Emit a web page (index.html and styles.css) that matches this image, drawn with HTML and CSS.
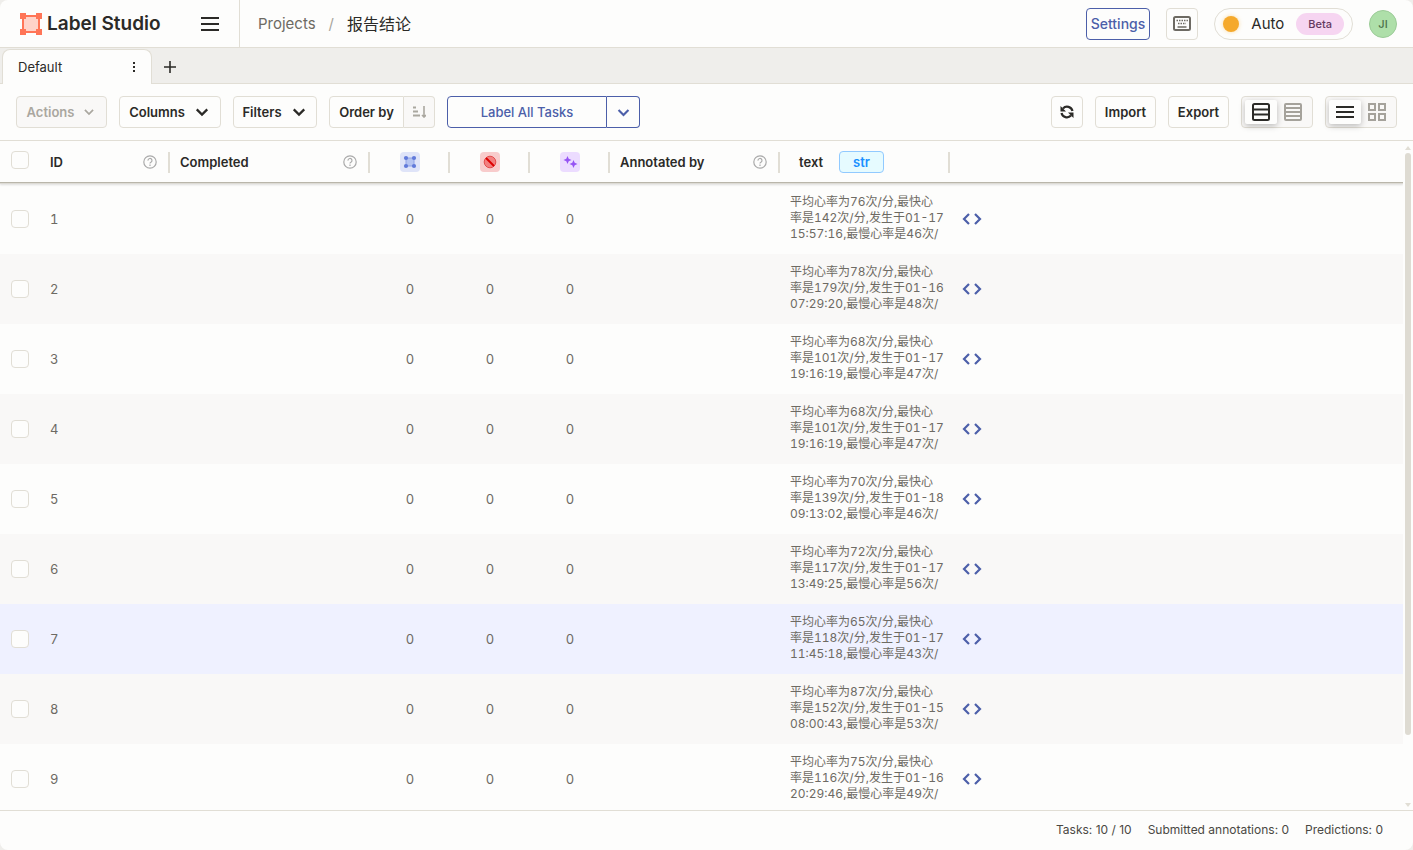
FILE: index.html
```
<!DOCTYPE html>
<html lang="zh">
<head>
    <meta charset="UTF-8">
    <meta name="viewport" content="width=device-width, initial-scale=1.0">
    <title>Label Studio</title>
    <link rel="stylesheet" href="styles.css">
</head>
<body>
    <svg class="sprite" aria-hidden="true">
        <symbol id="icon-chevron" viewBox="0 0 24 24"><path d="M5 8.500l7 7 7-7" fill="none" stroke="currentColor" stroke-width="3"/></symbol>
        <symbol id="icon-help" viewBox="0 0 14 14"><circle cx="7" cy="7" r="6.200" fill="none" stroke="currentColor" stroke-width="1.200"/><path d="M5 5.600a2 2 0 1 1 3 1.600c-.7.400-1 .6-1 1.200M7 9.600v1.300" fill="none" stroke="currentColor" stroke-width="1.200"/></symbol>
        <symbol id="icon-code" viewBox="0 0 20 12"><path d="M7 1L2 6l5 5M13 1l5 5-5 5" fill="none" stroke="currentColor" stroke-width="2.200"/></symbol>
    </svg>

    <header class="header">
        <a class="logo" href="#">
            <svg width="22" height="22" viewBox="0 0 22 22"><path d="M3 3h16v16H3z" fill="#ffd3c9" stroke="#ff7557" stroke-width="2"/><path d="M0 0h6v6H0zM16 0h6v6h-6zM0 16h6v6H0zM16 16h6v6h-6z" fill="#ff7557"/></svg>
            <span>Label Studio</span>
        </a>
        <button class="menu-button" aria-label="Menu"><svg width="18" height="14" viewBox="0 0 18 14"><path d="M0 1h18M0 7h18M0 13h18" stroke="currentColor" stroke-width="2"/></svg></button>
        <nav class="breadcrumbs">
            <a href="#">Projects</a>
            <span class="slash">/</span>
            <span class="current">报告结论</span>
        </nav>
        <div class="header-actions">
            <a class="settings" href="#">Settings</a>
            <button class="button keyboard" aria-label="Keyboard shortcuts"><svg width="18" height="15" viewBox="0 0 18 15"><rect x="1" y="1" width="16" height="13" rx="1.500" fill="none" stroke="currentColor" stroke-width="2"/><path d="M3.500 4.500h11.400M5 7.500h8" stroke="currentColor" stroke-width="1.500" stroke-dasharray="1.500 1"/><path d="M4.500 11h9" stroke="currentColor" stroke-width="1.500"/></svg></button>
            <button class="theme"><i class="sun"></i>Auto<span class="beta">Beta</span></button>
            <button class="avatar">JI</button>
        </div>
    </header>

    <div class="tabs">
        <div class="tab">
            <a href="#">Default</a>
            <button class="tab-menu" aria-label="Tab menu"><svg width="4" height="12" viewBox="0 0 4 12"><path d="M1 1h2v2H1zM1 5h2v2H1zM1 9h2v2H1z" fill="currentColor"/></svg></button>
        </div>
        <button class="tab-add" aria-label="Add tab"><svg width="12" height="12" viewBox="0 0 12 12"><path d="M6 0v12M0 6h12" stroke="currentColor" stroke-width="1.600"/></svg></button>
    </div>

    <div class="toolbar">
        <button class="button actions" disabled>Actions<svg width="14" height="14"><use href="#icon-chevron"/></svg></button>
        <button class="button columns">Columns<svg width="18" height="18"><use href="#icon-chevron"/></svg></button>
        <button class="button filters">Filters<svg width="18" height="18"><use href="#icon-chevron"/></svg></button>
        <div class="group">
            <button class="button order-by">Order by</button>
            <button class="button sort" disabled aria-label="Sort direction"><svg width="14" height="12" viewBox="0 0 14 12"><path d="M1 1.500h3M1 5.500h5M1 9.500h7" stroke="currentColor" stroke-width="2"/><path d="M12 0v11M10 9l2 2 2-2" fill="none" stroke="currentColor" stroke-width="1.600"/></svg></button>
        </div>
        <div class="group primary">
            <button class="button label-all">Label All Tasks</button>
            <button class="button label-menu" aria-label="Label options"><svg width="17" height="17"><use href="#icon-chevron"/></svg></button>
        </div>
        <div class="toolbar-right">
            <button class="button refresh" aria-label="Refresh"><svg width="14" height="14" viewBox="0 0 14 14"><path d="M12.500 6A5.600 5.600 0 0 0 3 3.400M1.500 8A5.600 5.600 0 0 0 11 10.600" fill="none" stroke="currentColor" stroke-width="2.200"/><path d="M.5 1v5.500H6zM13.500 13V7.500H8z" fill="currentColor"/></svg></button>
            <button class="button wide">Import</button>
            <button class="button wide">Export</button>
            <div class="toggle">
                <button class="selected" aria-label="Normal rows"><svg width="18" height="18" viewBox="0 0 18 18"><rect x="1" y="1" width="16" height="16" rx="1.500" fill="none" stroke="currentColor" stroke-width="2"/><path d="M1 6.500h16M1 11.500h16" stroke="currentColor" stroke-width="2"/></svg></button>
                <button aria-label="Compact rows"><svg width="18" height="18" viewBox="0 0 18 18"><rect x="1" y="1" width="16" height="16" rx="1" fill="none" stroke="currentColor" stroke-width="2"/><path d="M1 5h16M1 9h16M1 13h16" stroke="currentColor" stroke-width="1.800"/></svg></button>
            </div>
            <div class="toggle">
                <button class="selected" aria-label="List view"><svg width="18" height="12" viewBox="0 0 18 12"><path d="M0 1h18M0 6h18M0 11h18" stroke="currentColor" stroke-width="2"/></svg></button>
                <button aria-label="Grid view"><svg width="18" height="18" viewBox="0 0 18 18"><path d="M1 1h6v6H1zM11 1h6v6h-6zM1 11h6v6H1zM11 11h6v6h-6z" fill="none" stroke="currentColor" stroke-width="2"/></svg></button>
            </div>
        </div>
    </div>

    <main class="table-area">
        <div class="table-scroll">
            <table>
                <colgroup>
                    <col class="col-check"><col class="col-id"><col class="col-completed"><col class="col-count"><col class="col-count"><col class="col-count"><col class="col-annotated"><col class="col-text"><col>
                </colgroup>
                <thead>
                    <tr>
                        <th><input type="checkbox" aria-label="Select all"></th>
                        <th><div class="head">ID<svg width="14" height="14"><use href="#icon-help"/></svg></div></th>
                        <th><div class="head">Completed<svg width="14" height="14"><use href="#icon-help"/></svg></div></th>
                        <th><div class="head count"><span class="badge blue"><svg width="14" height="14" viewBox="0 0 14 14"><path d="M3 3h8v8H3z" fill="#b5c4f1" stroke="#8fa2e6"/><circle cx="3" cy="3" r="2.100"/><circle cx="11" cy="3" r="2.100"/><circle cx="3" cy="11" r="2.100"/><circle cx="11" cy="11" r="2.100"/></svg></span></div></th>
                        <th><div class="head count"><span class="badge red"><svg width="14" height="14" viewBox="0 0 14 14"><circle cx="7" cy="7" r="5.800" fill="#f28080" stroke="#e34d4d"/><path d="M3 3l8 8" stroke="#d00" stroke-width="2"/></svg></span></div></th>
                        <th><div class="head count"><span class="badge purple"><svg width="16" height="16" viewBox="0 0 16 16"><path d="M5.500 2l1.200 2.800L9.500 6 6.700 7.200 5.500 10 4.300 7.200 1.500 6l2.800-1.200zM11.500 6l1.200 2.800L15.500 10l-2.800 1.200L11.500 14l-1.200-2.800L7.500 10l2.800-1.200z"/></svg></span></div></th>
                        <th><div class="head">Annotated by<svg width="14" height="14"><use href="#icon-help"/></svg></div></th>
                        <th><div class="head text-head">text<span class="type">str</span></div></th>
                        <th></th>
                    </tr>
                </thead>
                <tbody id="tasks"></tbody>
            </table>
        </div>
        <div class="scrollbar" aria-hidden="true"><i class="arrow up"></i><i class="thumb"></i><i class="arrow down"></i></div>
    </main>

    <footer class="footer">
        <span>Tasks: 10 / 10</span>
        <span>Submitted annotations: 0</span>
        <span>Predictions: 0</span>
    </footer>
    <script src="tasks.js"></script>
</body>
</html>
```
FILE: styles.css
```
* {
    box-sizing: border-box;
}

:root {
    --surface: #fdfdfc;
    --surface-alt: #f9f8f7;
    --border: #e1ded5;
    --text: #2b2a27;
    --muted: #6d6a63;
    --blue: #4c5fa9;
}

html {
    background: #efeeeb;
}

body {
    margin: 0;
    height: 100vh;
    display: flex;
    flex-direction: column;
    overflow: hidden;
    border-radius: 8px;
    background: var(--surface);
    color: var(--text);
    font: 13px/20px Inter, "Noto Sans CJK SC", sans-serif;
}

button {
    font: inherit;
    color: inherit;
    margin: 0;
    padding: 0;
    border: 0;
    background: none;
    display: flex;
    align-items: center;
    justify-content: center;
}

a {
    color: inherit;
    text-decoration: none;
}

svg {
    display: block;
    flex: none;
}

.sprite {
    position: absolute;
    width: 0;
    height: 0;
}

.header {
    display: flex;
    align-items: center;
    flex: none;
    height: 48px;
    border-bottom: 1px solid var(--border);
}

.logo {
    display: flex;
    align-items: center;
    gap: 5px;
    width: 180px;
    padding-left: 20px;
    font: 600 19px/24px Inter, sans-serif;
    white-space: nowrap;
}

.menu-button {
    width: 60px;
    height: 47px;
    border-right: 1px solid var(--border);
}

.breadcrumbs {
    display: flex;
    gap: 13px;
    padding-left: 18px;
    font-size: 15px;
    color: var(--muted);
}

.slash {
    color: #a8a59d;
}

.current {
    font-size: 16px;
    color: var(--text);
}

.header-actions {
    display: flex;
    align-items: center;
    gap: 16px;
    margin-left: auto;
    padding-right: 16px;
}

.settings {
    padding: 5px 4px;
    border: 1px solid var(--blue);
    border-radius: 4px;
    color: var(--blue);
    font-size: 14px;
    font-weight: 500;
}

.button {
    height: 32px;
    padding: 0 8px;
    border: 1px solid var(--border);
    border-radius: 4px;
    font-weight: 600;
    white-space: nowrap;
}

.button:disabled {
    background: var(--surface-alt);
    color: #aaa79f;
}

.keyboard {
    width: 32px;
    color: var(--muted);
}

.theme {
    height: 32px;
    padding: 0 8px;
    border: 1px solid var(--border);
    border-radius: 16px;
    font-size: 15px;
}

.sun {
    width: 16px;
    height: 16px;
    margin-right: 12px;
    border-radius: 50%;
    background: #f5a92c;
    box-shadow: 0 0 4px #f5a92c66;
}

.beta {
    margin-left: 12px;
    padding: 1px 12px;
    border-radius: 11px;
    background: #f6d5f1;
    color: #65395f;
    font-size: 11px;
    font-weight: 500;
}

.avatar {
    width: 28px;
    height: 28px;
    border: 1px solid #9bcb97;
    border-radius: 50%;
    background: #aedfa9;
    color: #4c704a;
    font-size: 11px;
    font-weight: 500;
}

.tabs {
    display: flex;
    flex: none;
    height: 36px;
    padding: 1px 0 0 2px;
    background: #efeeeb;
    box-shadow: inset 0 -1px var(--border);
}

.tab {
    display: flex;
    align-items: center;
    justify-content: space-between;
    width: 150px;
    padding: 0 8px 0 15px;
    border: 1px solid var(--border);
    border-bottom: 0;
    border-radius: 8px 8px 0 0;
    background: var(--surface);
}

.tab-menu {
    width: 18px;
    height: 24px;
}

.tab-add {
    width: 36px;
}

.toolbar {
    display: flex;
    flex: none;
    gap: 12px;
    padding: 12px 16px;
    border-bottom: 1px solid var(--border);
}

.actions {
    width: 91px;
    gap: 8px;
}

.columns {
    width: 102px;
    gap: 8px;
}

.filters {
    width: 84px;
    gap: 8px;
}

.group {
    display: flex;
}

.group .button:first-child {
    border-radius: 4px 0 0 4px;
}

.group .button:last-child {
    border-left: 0;
    border-radius: 0 4px 4px 0;
}

.order-by {
    width: 75px;
}

.sort {
    width: 31px;
}

.primary .button {
    border-color: var(--blue);
    color: var(--blue);
    font-weight: 500;
}

.label-all {
    width: 160px;
}

.label-menu {
    width: 33px;
}

.toolbar-right {
    display: flex;
    gap: 12px;
    margin-left: auto;
}

.refresh {
    width: 32px;
}

.wide {
    min-width: 61px;
}

.toggle {
    display: flex;
    padding: 3px;
    border: 1px solid var(--border);
    border-radius: 4px;
    background: var(--surface-alt);
}

.toggle button {
    width: 32px;
    color: #a5a29b;
}

.toggle .selected {
    border-radius: 2px;
    background: var(--surface);
    color: var(--text);
    box-shadow: 0 2px 6px #00000040;
}

.table-area {
    display: flex;
    flex: 1;
    min-height: 0;
}

.table-scroll {
    flex: 1;
    overflow: hidden;
}

table {
    width: 100%;
    border-collapse: separate;
    border-spacing: 0;
    table-layout: fixed;
}

.col-check {
    width: 40px;
}

.col-id {
    width: 130px;
}

.col-completed {
    width: 200px;
}

.col-count {
    width: 80px;
}

.col-annotated,
.col-text {
    width: 170px;
}

thead {
    box-shadow: 0 1px 2px #00000020;
}

th,
td {
    padding: 0;
    text-align: left;
}

th {
    height: 43px;
    border-bottom: 1px solid #dddbd5;
    box-shadow: inset 0 -1px #b9b6aa;
    font-weight: 600;
}

.head {
    display: flex;
    align-items: center;
    justify-content: space-between;
    height: 21px;
    padding: 0 11px 0 10px;
    border-right: 2px solid var(--border);
}

.head > svg {
    color: #aaa;
}

.head.count {
    justify-content: center;
    padding: 0 0 0 2px;
}

.head.text-head {
    justify-content: flex-start;
    gap: 16px;
    padding-left: 19px;
}

.badge {
    display: flex;
    align-items: center;
    justify-content: center;
    width: 20px;
    height: 20px;
    border-radius: 4px;
}

.blue {
    background: #dfe4f8;
    fill: #617ada;
}

.red {
    background: #f8cccc;
}

.purple {
    background: #ecdcff;
    fill: #9654f4;
}

.type {
    padding: 0 13px;
    border: 1px solid #91caff;
    border-radius: 4px;
    background: #e6fbff;
    color: #1890ff;
}

input[type="checkbox"] {
    appearance: none;
    display: block;
    width: 18px;
    height: 18px;
    margin: 0 0 0 11px;
    border: 1px solid var(--border);
    border-radius: 4px;
    background: var(--surface);
}

th input[type="checkbox"] {
    margin-bottom: 4px;
}

td {
    height: 70px;
    padding: 0 10px;
    color: var(--muted);
    font-variant-numeric: tabular-nums;
}

td:first-child {
    padding: 0;
}

tbody tr:nth-child(even) {
    background: var(--surface-alt);
}

tbody tr:nth-child(7) {
    background: #eff1ff;
}

.number {
    text-align: center;
}

.text {
    padding-right: 4px;
}

.content {
    height: 48px;
    margin-bottom: 2px;
    overflow: hidden;
    font-size: 12px;
    line-height: 16px;
    white-space: pre;
}

.code {
    width: 24px;
    height: 24px;
    color: var(--blue);
}

.scrollbar {
    display: flex;
    flex-direction: column;
    align-items: center;
    gap: 3px;
    width: 10px;
    padding: 5px 2px 3px;
}

.thumb {
    width: 6px;
    height: 88%;
    border-radius: 3px;
    background: #dedbd2;
}

.arrow {
    border: 3px solid transparent;
}

.up {
    border-top: 0;
    border-bottom: 4px solid var(--border);
}

.down {
    margin-top: auto;
    border-bottom: 0;
    border-top: 4px solid var(--border);
}

.footer {
    display: flex;
    flex: none;
    justify-content: flex-end;
    gap: 16px;
    padding: 9px 30px 10px;
    border-top: 1px solid var(--border);
    color: #4a4843;
    font-size: 12px;
}
```
FILE: tasks.js
```
const tasks = [
    ['平均心率为76次/分,最快心', '率是142次/分,发生于01-17', '15:57:16,最慢心率是46次/'],
    ['平均心率为78次/分,最快心', '率是179次/分,发生于01-16', '07:29:20,最慢心率是48次/'],
    ['平均心率为68次/分,最快心', '率是101次/分,发生于01-17', '19:16:19,最慢心率是47次/'],
    ['平均心率为68次/分,最快心', '率是101次/分,发生于01-17', '19:16:19,最慢心率是47次/'],
    ['平均心率为70次/分,最快心', '率是139次/分,发生于01-18', '09:13:02,最慢心率是46次/'],
    ['平均心率为72次/分,最快心', '率是117次/分,发生于01-17', '13:49:25,最慢心率是56次/'],
    ['平均心率为65次/分,最快心', '率是118次/分,发生于01-17', '11:45:18,最慢心率是43次/'],
    ['平均心率为87次/分,最快心', '率是152次/分,发生于01-15', '08:00:43,最慢心率是53次/'],
    ['平均心率为75次/分,最快心', '率是116次/分,发生于01-16', '20:29:46,最慢心率是49次/']
];

document.getElementById('tasks').innerHTML = tasks.map((lines, i) => `
    <tr>
        <td><input type="checkbox" aria-label="Select task ${i + 1}"></td>
        <td>${i + 1}</td>
        <td></td>
        <td class="number">0</td>
        <td class="number">0</td>
        <td class="number">0</td>
        <td></td>
        <td class="text"><div class="content">${lines.join('\n')}</div></td>
        <td><button class="code" aria-label="Show source"><svg width="20" height="12"><use href="#icon-code"/></svg></button></td>
    </tr>`).join('');
```
